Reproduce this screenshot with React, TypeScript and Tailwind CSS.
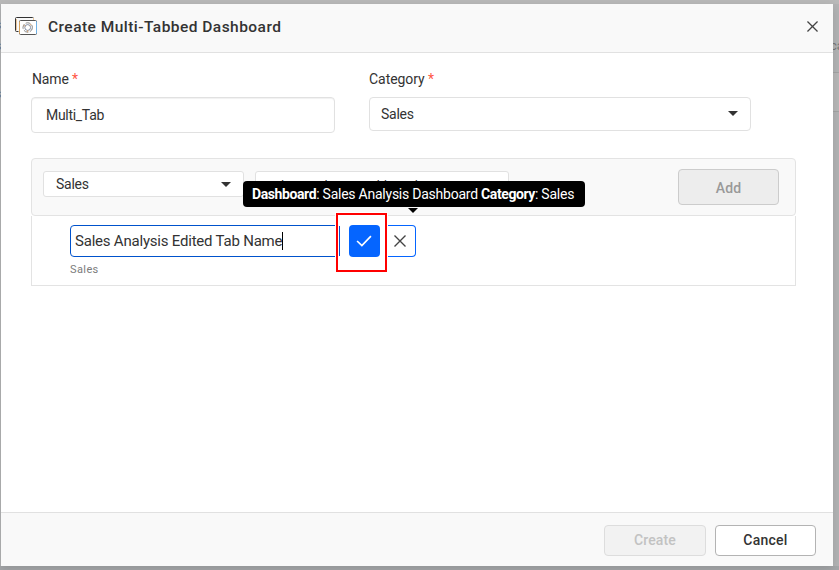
import React from "react";

function Caret() {
  return (
    <svg width="10" height="5" viewBox="0 0 10 5" className="relative -top-px shrink-0">
      <path d="M0 0H10L5 5Z" fill="#333" />
    </svg>
  );
}

function Cross({ size, width }: { size: number; width: number }) {
  return (
    <svg width={size} height={size} viewBox="0 0 12 12" fill="none" stroke="#444" strokeWidth={width} className="shrink-0">
      <path d="M.5 .5L11.5 11.5M11.5 .5L.5 11.5" />
    </svg>
  );
}

function TabsIcon() {
  return (
    <svg width="22" height="18" viewBox="0 0 22 18" fill="none">
      <path d="M3.5 14.5H1.5Q.5 14.5 .5 13.5V1.5Q.5 .5 1.5 .5H17.5Q18.5 .5 18.5 1.5" stroke="#333" />
      <path d="M18.5 1V3.5M1.5 2V13.5" stroke="#e8c59c" />
      <rect x="4.5" y="3.5" width="17" height="14" rx="1" fill="#fff" stroke="#555" />
      <path d="M4.5 4.5V16.5" stroke="#d9a35c" />
      <path d="M21.5 4.5V16.5" stroke="#6fb1e6" />
      <circle cx="12.7" cy="10.5" r="4.7" stroke="#777" strokeWidth=".9" strokeDasharray="5 1.5" />
      <circle cx="12.7" cy="10.5" r="2.9" stroke="#637391" strokeWidth=".8" />
      <path d="M8.6 8.2L10.3 9.3M12.7 13.2V15.2M14.8 8.6L16.2 7" stroke="#d29a62" strokeWidth=".9" />
    </svg>
  );
}

export default function App() {
  return (
    <div className="relative h-[570px] w-[839px] overflow-hidden bg-[#b2b3b4] font-['Roboto',sans-serif] text-[14px] text-[#333]">
      <div className="absolute inset-x-0 top-0 h-1 bg-[#b9b9b9]" />
      <div className="absolute inset-x-0 bottom-0 h-1 bg-[#a5a7a9]" />
      <div className="absolute top-[72px] right-0 h-[40px] w-[10px] border-y border-[#a3a3a3] bg-[#b7b7b7]" />
      <span className="absolute top-[37px] left-[830px] text-[13px] leading-[18px] text-[#777]">ca</span>
      <span className="absolute top-[17px] left-[-5px] text-[12px] leading-4 text-[#666]">s</span>
      <span className="absolute top-[38px] left-[-5px] text-[12px] leading-4 text-[#666]">s</span>
      <span className="absolute top-[86px] left-[-5px] text-[12px] leading-4 text-[#666]">s</span>

      <div className="relative mt-1 ml-px flex h-[562px] w-[832px] flex-col bg-white shadow-[0_3px_9px_rgba(0,0,0,.12)]">
        <header className="flex h-[49px] shrink-0 items-center border-b border-[#e1e1e1] bg-[#f9f9f9] pr-[15px] pb-[3px] pl-[14px]">
          <div className="relative -top-px"><TabsIcon /></div>
          <h1 className="ml-[11px] grow text-[15.5px] leading-5 font-medium tracking-[.46px]">Create Multi-Tabbed Dashboard</h1>
          <Cross size={11} width={1.4} />
        </header>

        <main className="grow px-[30px] pt-[17px]">
          <div className="flex gap-[34px]">
            <div className="w-[304px]">
              <label className="block h-[27px] pl-px text-[14px] leading-[18px] tracking-[-.15px]">Name <span className="text-[#ff5746]">*</span></label>
              <div className="flex h-[36px] items-center rounded-[4px] border border-[#e1e1e1] px-[14px] tracking-[-.3px] shadow-[inset_0_1px_1px_rgba(0,0,0,.06)]">Multi_Tab</div>
            </div>
            <div className="w-[382px]">
              <label className="block h-[27px] text-[14px] leading-[18px] tracking-[-.05px]">Category <span className="text-[#ff5746]">*</span></label>
              <div className="flex h-[34px] items-center justify-between rounded-[4px] border border-[#e1e1e1] pr-[12px] pl-[11px] tracking-[-.25px]">Sales<Caret /></div>
            </div>
          </div>

          <section className="relative mt-[25px] w-[765px]">
            <div className="flex h-[58px] items-start gap-[11px] rounded-[4px] border border-[#e3e3e3] bg-[#f9f9f9] pl-[11px]">
              <div className="mt-[12px] flex h-[26px] w-[201px] items-center justify-between rounded-[3px] border border-[#e1e1e1] bg-white pr-[12px] pl-[12px] tracking-[-.25px]">Sales<span className="relative top-px flex"><Caret /></span></div>
              <div className="mt-[12px] flex h-[26px] w-[254px] items-center rounded-[3px] border border-[#e1e1e1] bg-white pt-[4px] pl-[10px] text-[13px] tracking-[.1px]">Sales Analysis Dashboard</div>
              <button className="mt-[10px] mr-[16px] ml-auto h-[36px] w-[101px] rounded-[4px] border border-[#ccc] bg-[#ededed] pt-[3px] font-medium tracking-[.1px] text-[#999]">Add</button>
            </div>
            <div className="h-[70px] border-x border-b border-[#e3e3e3] pt-[9px] pl-[38px]">
              <div className="flex h-[32px]">
                <div className="flex w-[270px] items-center rounded-[4px] border border-[#0052cc] pl-[4px] text-[15px]">
                  <span className="tracking-[-.21px]">Sales Analysis Edited Tab Name</span>
                  <span className="h-[18px] w-px bg-black" />
                </div>
                <div className="flex w-[76px] items-center justify-end rounded-r-[4px] border border-l-0 border-[#0565ff] pr-[9px]"><Cross size={12} width={1.35} /></div>
              </div>
              <p className="mt-[5px] text-[11px] leading-4 tracking-[.4px] text-[#7c7c7c]">Sales</p>
            </div>

            <div className="absolute top-[54px] left-[304px] flex h-[61px] w-[53px] border border-white bg-white">
              <div className="flex h-[59px] w-[51px] items-start border-2 border-[#f00] pt-[10px]">
                <span className="mt-px mr-[9px] ml-px h-[30px] w-px bg-[#0052cc]" />
                <button className="flex h-[32px] w-[31px] items-center justify-center rounded-[4px] bg-[#0565ff] pr-px">
                  <svg width="16" height="12" viewBox="0 0 17 13" fill="none" stroke="#fff" strokeWidth="1.8"><path d="M1 6.5L6.2 11.5L16 1.2" /></svg>
                </button>
              </div>
            </div>
            <div className="absolute top-[23px] left-[212px] flex h-[26px] w-[342px] items-center rounded-[4px] bg-black pl-[9px] text-[14px] tracking-[-.24px] whitespace-pre text-white">
              <span><b className="font-bold tracking-[-.4px]">Dashboard</b>: Sales Analysis Dashboard <b className="font-bold tracking-[-.4px]">Category</b>: Sales</span>
              <svg className="absolute top-[27px] left-[165px]" width="10" height="5" viewBox="0 0 10 5"><path d="M0 0H10L5 5Z" fill="#000" /></svg>
            </div>
          </section>
        </main>

        <footer className="flex h-[54px] shrink-0 items-start justify-end gap-[9px] border-t border-[#e1e1e1] bg-[#f9f9f9] pt-[12px] pr-[17px]">
          <button className="h-[31px] w-[102px] rounded-[4px] border border-[#ddd] bg-[#f2f2f2] font-medium tracking-[.15px] text-[#c2c2c2]">Create</button>
          <button className="h-[31px] w-[101px] rounded-[4px] border border-[#b3b3b3] bg-white font-medium tracking-[.25px] text-[#333]">Cancel</button>
        </footer>
      </div>
    </div>
  );
}
